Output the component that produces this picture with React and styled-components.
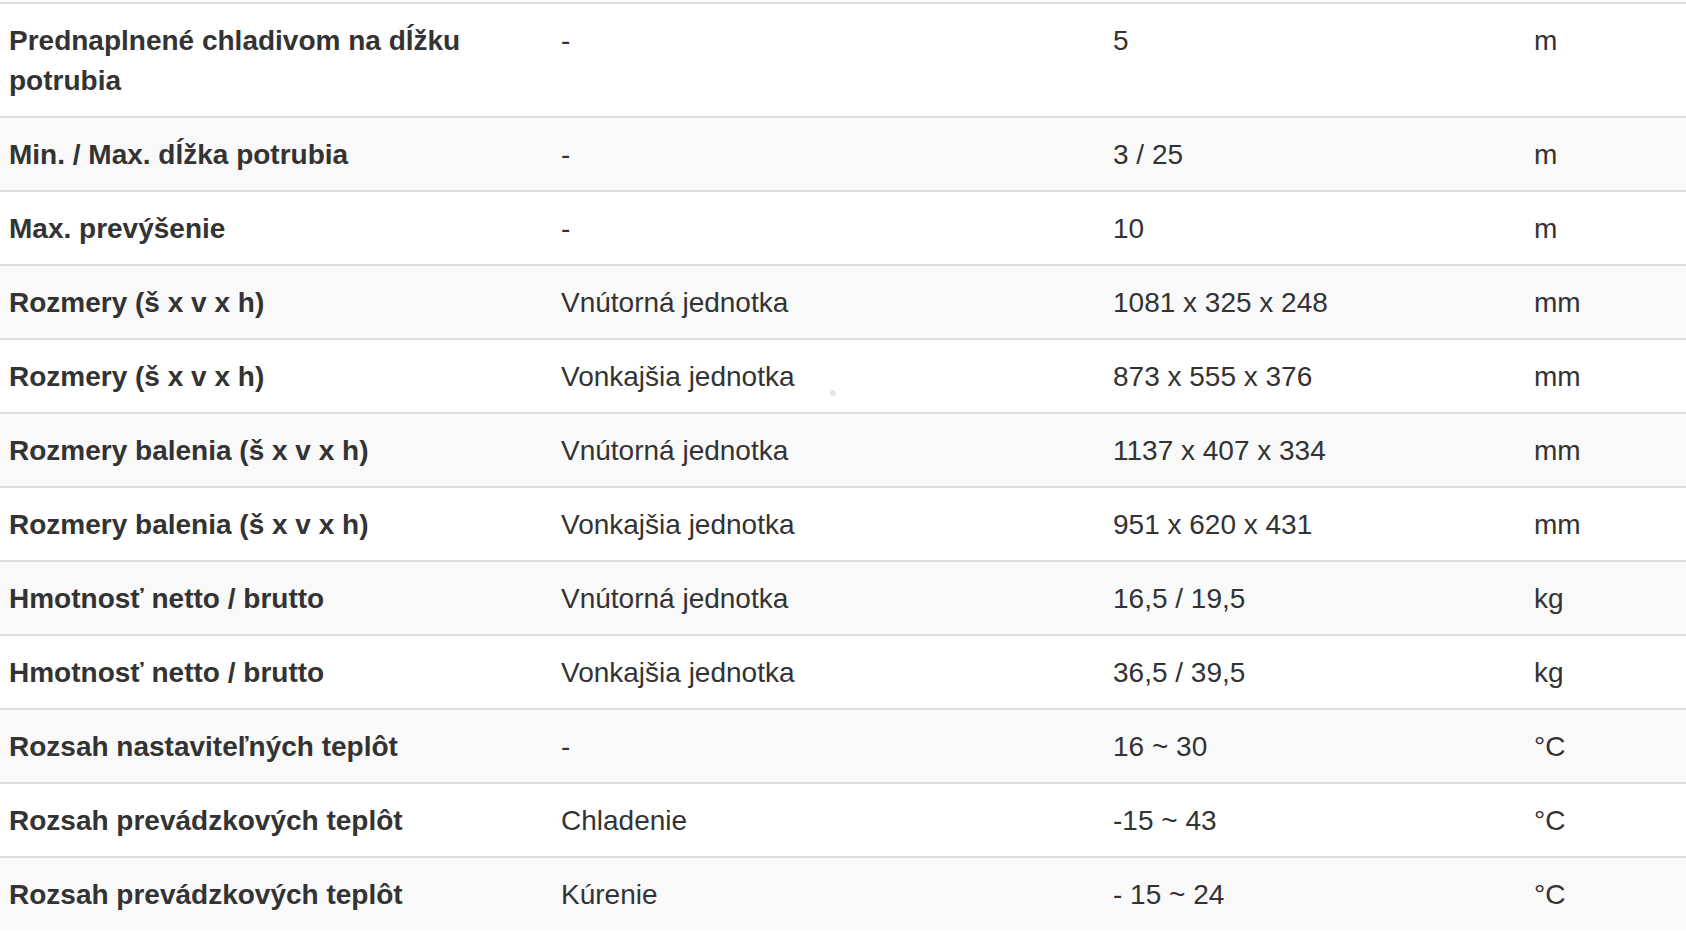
import styled, { createGlobalStyle } from "styled-components"

const rows = [
    ["Prednaplnené chladivom na dĺžku potrubia", "-", "5", "m"],
    ["Min. / Max. dĺžka potrubia", "-", "3 / 25", "m"],
    ["Max. prevýšenie", "-", "10", "m"],
    ["Rozmery (š x v x h)", "Vnútorná jednotka", "1081 x 325 x 248", "mm"],
    ["Rozmery (š x v x h)", "Vonkajšia jednotka", "873 x 555 x 376", "mm"],
    ["Rozmery balenia (š x v x h)", "Vnútorná jednotka", "1137 x 407 x 334", "mm"],
    ["Rozmery balenia (š x v x h)", "Vonkajšia jednotka", "951 x 620 x 431", "mm"],
    ["Hmotnosť netto / brutto", "Vnútorná jednotka", "16,5 / 19,5", "kg"],
    ["Hmotnosť netto / brutto", "Vonkajšia jednotka", "36,5 / 39,5", "kg"],
    ["Rozsah nastaviteľných teplôt", "-", "16 ~ 30", "°C"],
    ["Rozsah prevádzkových teplôt", "Chladenie", "-15 ~ 43", "°C"],
    ["Rozsah prevádzkových teplôt", "Kúrenie", "- 15 ~ 24", "°C"],
]

const App = () => {
    return (
        <>
            <GlobalStyle />
            <Page>
                <Table>
                    {rows.map((r, i) => (
                        <Row key={i} $striped={i % 2 === 1}>
                            <Label>{r[0]}</Label>
                            <Cell>{r[1]}</Cell>
                            <Cell>{r[2]}</Cell>
                            <Cell>{r[3]}</Cell>
                        </Row>
                    ))}
                </Table>
                <Dot />
            </Page>
        </>
    )
}

export default App

const GlobalStyle = createGlobalStyle`
    html, body {
        margin: 0;
        padding: 0;
        background: #ffffff;
        overflow: hidden;
    }
`

const Page = styled.div`
    position: relative;
    width: 1686px;
    height: 932px;
    padding-top: 2px;
    box-sizing: border-box;
    overflow: hidden;
    background: #ffffff;
`

const Table = styled.div`
    display: flex;
    flex-direction: column;
    font-family: "Liberation Sans", Arial, sans-serif;
    font-size: 28px;
    line-height: 40px;
    color: #333333;
`

const Row = styled.div`
    display: grid;
    grid-template-columns: 553px 552px 421px 1fr;
    border-top: 2px solid #dddddd;
    background: ${p => (p.$striped ? "#f9f9f9" : "#ffffff")};
`

const Cell = styled.div`
    padding: 17px 8px 15px;
`

const Label = styled(Cell)`
    font-weight: bold;
    padding-left: 9px;
`

const Dot = styled.span`
    position: absolute;
    left: 830px;
    top: 390px;
    width: 6px;
    height: 6px;
    border-radius: 50%;
    background: #e4e4e4;
`
